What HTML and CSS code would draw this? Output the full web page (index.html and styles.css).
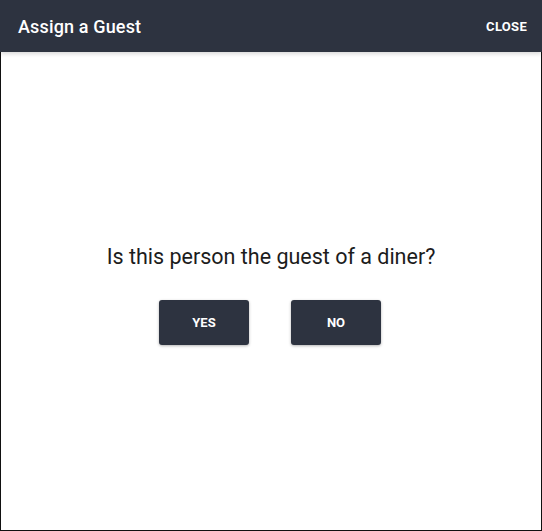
FILE: index.html
```html
<!DOCTYPE html>
<html lang="en">
<head>
  <meta charset="UTF-8" />
  <title>Assign a Guest</title>
  <link rel="stylesheet" href="styles.css">
</head>
<body>

  <!-- Dialog -->
  <div class="dialog">
    <header class="dialog-header">
      <h1>Assign a Guest</h1>
      <button class="close-btn">CLOSE</button>
    </header>

    <main class="dialog-body">
      <p class="question">Is this person the guest of a diner?</p>
      <div class="actions">
        <button class="action-btn">YES</button>
        <button class="action-btn">NO</button>
      </div>
    </main>
  </div>

</body>
</html>
```

FILE: styles.css
```css
/* Reset & Base */
* {
  box-sizing: border-box;
  margin: 0;
  padding: 0;
}

html, body {
  height: 100%;
}

body {
  font-family: Roboto, 'Liberation Sans', sans-serif;
  background-color: #fff;
  color: #1c1c1c;
}

button {
  font-family: inherit;
  border: none;
  cursor: pointer;
}

/* Dialog */
.dialog {
  width: 542px;
  height: 531px;
  display: flex;
  flex-direction: column;
  border: 1px solid #111;
  border-top: none;
  background-color: white;
}

.dialog-header {
  height: 52px;
  display: flex;
  align-items: center;
  justify-content: space-between;
  background-color: #2d3340;
  color: white;
  padding: 0 15px 0 18px;
  margin: 0 -1px;
  box-shadow: 0 2px 4px rgba(0,0,0,0.15);
  position: relative;
}

.dialog-header h1 {
  font-size: 18px;
  font-weight: 500;
  letter-spacing: 0.15px;
}

.close-btn {
  background: none;
  color: white;
  font-size: 13px;
  font-weight: 700;
  letter-spacing: 0.3px;
}

/* Body */
.dialog-body {
  flex: 1;
  display: flex;
  flex-direction: column;
  align-items: center;
  justify-content: center;
  padding-top: 6px;
}

.question {
  font-size: 21.5px;
  line-height: 25px;
  margin-bottom: 31px;
}

.actions {
  display: flex;
  gap: 42px;
  margin-left: -2px;
}

.action-btn {
  width: 90px;
  height: 45px;
  background-color: #2d3340;
  color: white;
  font-size: 13px;
  font-weight: 700;
  border-radius: 3px;
  box-shadow: 0 1px 3px rgba(0,0,0,0.3);
}

.action-btn:hover {
  background-color: #3b4252;
}
```
